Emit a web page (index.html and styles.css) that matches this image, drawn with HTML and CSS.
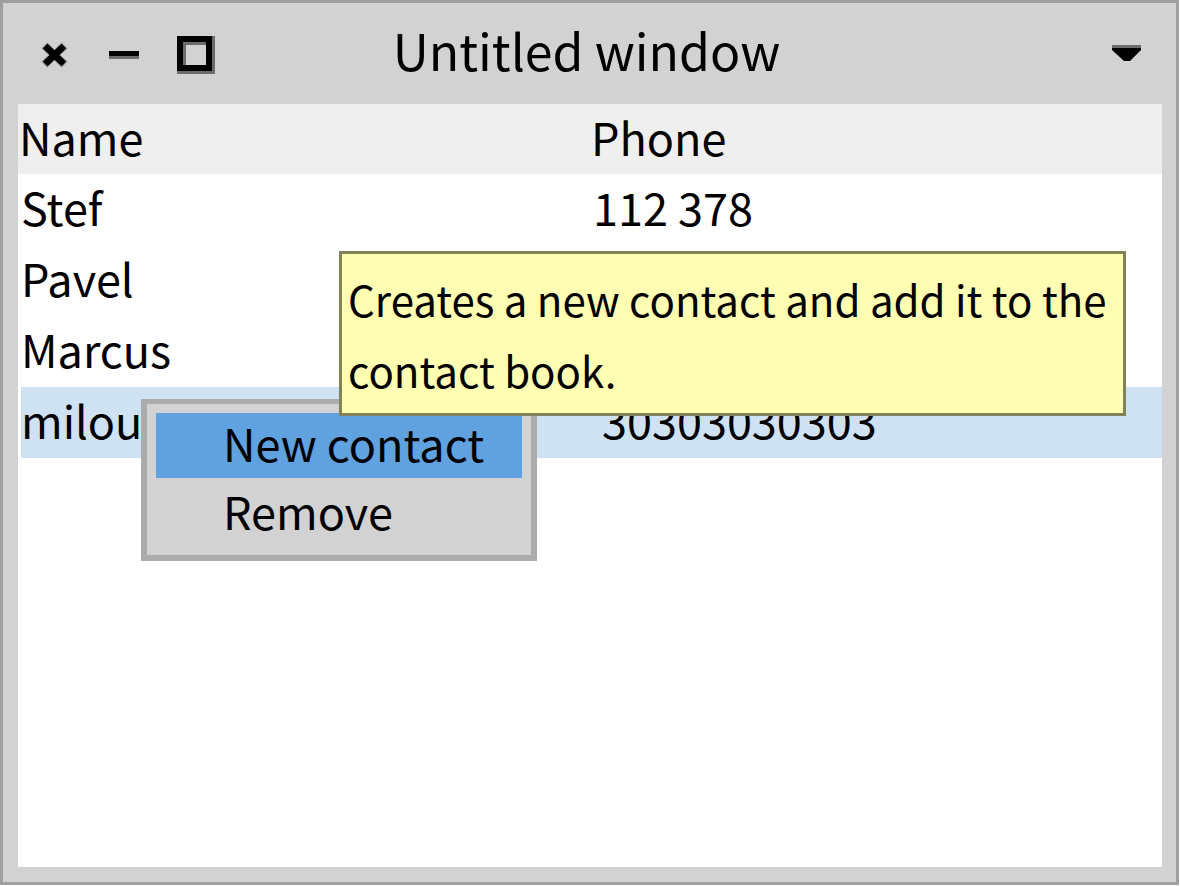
FILE: index.html
```html
<!DOCTYPE html>
<html lang="en">
<head>
<meta charset="utf-8">
<title>Untitled window</title>
<link rel="stylesheet" href="styles.css">
</head>
<body>
<main class="window">
  <header class="titlebar">
    <div class="controls">
      <button class="control" type="button" aria-label="Close">
        <svg width="38" height="38" viewBox="0 0 38 38"><path d="M9 9L30 29M30 9L9 29" stroke="#000" stroke-opacity=".12" stroke-width="9"/><path d="M10 10L29 28M29 10L10 28" stroke="#000" stroke-width="7"/></svg>
      </button>
      <button class="control" type="button" aria-label="Minimize">
        <svg width="38" height="38" viewBox="0 0 38 38"><path d="M3 15h30v5H3z"/><path d="M3 20h30v3H3z" fill="#6b6b6b"/></svg>
      </button>
      <button class="control" type="button" aria-label="Maximize">
        <svg width="38" height="38" viewBox="0 0 38 38"><path d="M0 0h38v38H0zM9 9v20h20V9z" fill="#6b6b6b" fill-rule="evenodd"/><path d="M0 0h35v35H0zM6 6v23h23V6z" fill-rule="evenodd"/></svg>
      </button>
    </div>
    <h1 class="title">Untitled window</h1>
    <button class="control" type="button" aria-label="Window menu">
      <svg width="38" height="38" viewBox="0 0 38 38"><path d="M4 9h29v3H4z" fill="#6b6b6b"/><path d="M4 12h29v2l-11 11h-6L4 14z"/></svg>
    </button>
  </header>
  <section class="content">
    <table class="contacts">
      <thead>
        <tr><th>Name</th><th>Phone</th></tr>
      </thead>
      <tbody>
        <tr><td>Stef</td><td>112 378</td></tr>
        <tr><td>Pavel</td><td></td></tr>
        <tr><td>Marcus</td><td></td></tr>
        <tr class="selected"><td>milou</td><td class="number">30303030303</td></tr>
      </tbody>
    </table>
    <div class="menu" role="menu">
      <button class="item active" type="button" role="menuitem" aria-describedby="tip">New contact</button>
      <button class="item" type="button" role="menuitem">Remove</button>
    </div>
    <div class="tooltip" role="tooltip" id="tip">Creates a new contact and add it to the contact book.</div>
  </section>
</main>
</body>
</html>
```
FILE: styles.css
```css
* {
  box-sizing: border-box;
}

body {
  margin: 0;
  padding: 0 1px 1px 0;
  height: 100vh;
  background: #fff;
  color: #000;
  font: 45px/66px "Noto Sans CJK SC", "Noto Sans", sans-serif;
}

button {
  border: 0;
  padding: 0;
  background: none;
  color: inherit;
  font: inherit;
}

.window {
  display: flex;
  flex-direction: column;
  height: 100%;
  padding: 0 14px 15px 15px;
  border: 3px solid #9f9f9f;
  background: #d2d2d2;
}

.titlebar {
  display: grid;
  grid-template-columns: 1fr auto 1fr;
  align-items: start;
  padding: 0 16px 9px 17px;
}

.controls {
  display: flex;
  gap: 33px;
}

.control {
  width: 38px;
  height: 38px;
  margin-top: 33px;
  justify-self: end;
}

.control svg {
  display: block;
}

.title {
  margin: 0;
  padding-right: 8px;
  font-size: 50px;
  font-weight: 400;
  line-height: 92px;
}

.content {
  position: relative;
  flex: 1;
  background: #fff;
}

.contacts {
  width: 100%;
  table-layout: fixed;
  border-collapse: collapse;
}

.contacts th {
  padding: 0 0 4px 1px;
  background: #efefef;
  font-weight: 400;
  text-align: left;
}

.contacts td {
  height: 71px;
  padding: 0 0 5px 3px;
}

.selected {
  background: linear-gradient(to right, #fff 3px, #cfe2f4 3px);
}

.contacts .number {
  padding-left: 12px;
}

.menu {
  position: absolute;
  top: 295px;
  left: 123px;
  display: flex;
  flex-direction: column;
  gap: 3px;
  width: 396px;
  padding: 9px;
  border: 6px solid #acacac;
  border-top-width: 5px;
  background: #d2d2d2;
}

.item {
  padding: 0 0 5px 67px;
  line-height: 60px;
  text-align: left;
}

.active {
  background: #60a1e0;
}

.tooltip {
  position: absolute;
  top: 147px;
  left: 321px;
  width: 787px;
  padding: 9px 6px 8px;
  border: 3px solid #82825a;
  background: #fffeb3;
  font-size: 42px;
  line-height: 71px;
}
```
